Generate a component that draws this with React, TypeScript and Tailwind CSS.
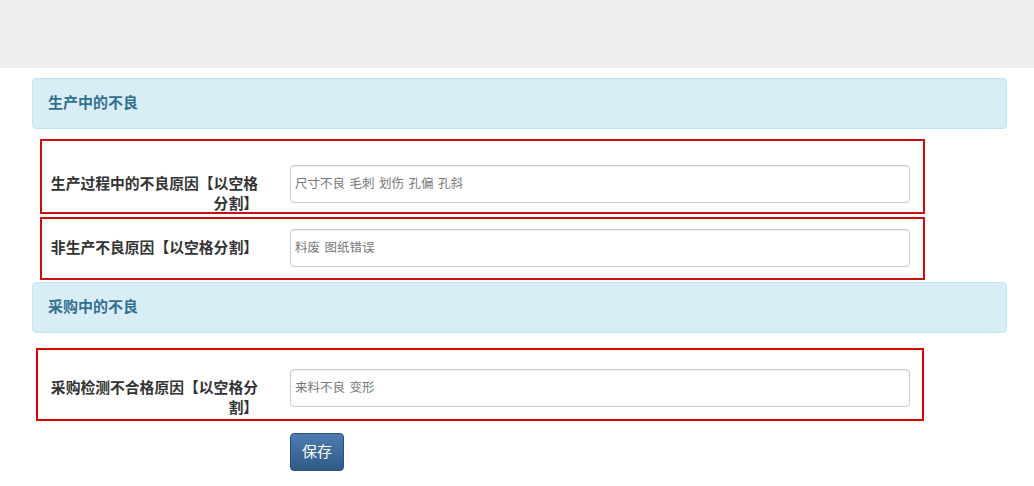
import React from "react";

const font = { fontFamily: '"Liberation Sans", "Noto Sans CJK SC", sans-serif' };

function Row({
  label,
  value,
  boxClass,
}: {
  label: string;
  value: string;
  boxClass: string;
}) {
  return (
    <div className={boxClass}>
      <div className="flex items-start">
        <label className="mt-[9px] w-[208px] shrink-0 text-right text-[14.8px] font-bold leading-[20px] text-[#333]">
          {label}
        </label>
        <input
          readOnly
          placeholder={value}
          className="ml-[32px] h-[38px] w-[620px] rounded-[4px] border border-[#cccccc] bg-white px-[4px] text-[12.5px] text-[#555] placeholder:text-[#777] shadow-[inset_0_1px_1px_rgba(0,0,0,0.075)] outline-none [word-spacing:1px]"
        />
      </div>
    </div>
  );
}

export default function App() {
  return (
    <div className="min-h-[486px] w-[1034px] bg-white" style={font}>
      <div className="h-[68px] bg-[#eeeeee]" />
      <div className="pl-[32px] pr-[27px]">
        <div className="mt-[10px] flex h-[51px] items-center rounded-[4px] border border-[#bce8f1] bg-[#d9edf7] pl-[15px] text-[15px] font-bold text-[#31708f]">
          生产中的不良
        </div>
        <Row
          label="生产过程中的不良原因【以空格分割】"
          value="尺寸不良 毛刺 划伤 孔偏 孔斜"
          boxClass="ml-[8px] mt-[10px] h-[75px] w-[885px] border-2 border-[#cc0d0d] pl-[8px] pt-[24px]"
        />
        <Row
          label="非生产不良原因【以空格分割】"
          value="料废 图纸错误"
          boxClass="ml-[8px] mt-[3px] h-[63px] w-[885px] border-2 border-[#cc0d0d] pl-[8px] pt-[10px]"
        />
        <div className="mt-[2px] flex h-[51px] items-center rounded-[4px] border border-[#bce8f1] bg-[#d9edf7] pl-[15px] text-[15px] font-bold text-[#31708f]">
          采购中的不良
        </div>
        <Row
          label="采购检测不合格原因【以空格分割】"
          value="来料不良 变形"
          boxClass="ml-[4px] mt-[15px] h-[73px] w-[888px] border-2 border-[#e00000] pl-[12px] pt-[19px]"
        />
        <div className="mt-[12px] pl-[258px]">
          <button className="h-[38px] w-[54px] rounded-[4px] border border-[#2a4f7a] bg-gradient-to-b from-[#4f7db0] to-[#2e5a88] text-[15px] text-white">
            保存
          </button>
        </div>
      </div>
    </div>
  );
}
